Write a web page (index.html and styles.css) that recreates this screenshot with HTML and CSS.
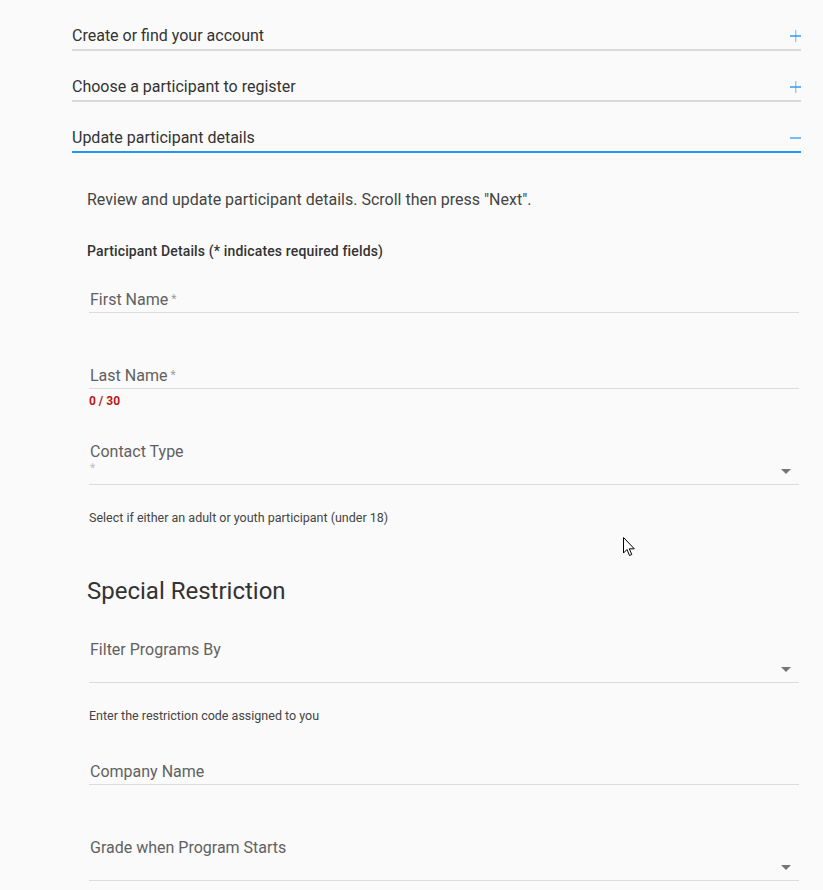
FILE: index.html
```html
<!DOCTYPE html>
<html>
<head>
<meta charset="utf-8">
<link rel="stylesheet" href="styles.css">
</head>
<body>
<div class="page">
  <div class="acc">
    <div class="acc-head"><span>Create or find your account</span>
      <svg class="ico" width="11" height="12" viewBox="0 0 11 12"><rect x="5" y="0" width="1.4" height="12" fill="#90c8f6"/><rect x="0" y="5.3" width="11" height="1.4" fill="#2196f3"/></svg>
    </div>
    <div class="acc-head"><span>Choose a participant to register</span>
      <svg class="ico" width="11" height="12" viewBox="0 0 11 12"><rect x="5" y="0" width="1.4" height="12" fill="#90c8f6"/><rect x="0" y="5.3" width="11" height="1.4" fill="#2196f3"/></svg>
    </div>
    <div class="acc-head open"><span>Update participant details</span>
      <svg class="ico" width="11" height="12" viewBox="0 0 11 12"><rect x="0" y="5.4" width="11" height="1.2" fill="#2196f3"/></svg>
    </div>
    <div class="panel">
      <p class="intro">Review and update participant details. Scroll then press "Next".</p>
      <p class="sub">Participant Details (* indicates required fields)</p>

      <div class="field f-first">
        <div class="label">First Name<span class="req">*</span></div>
      </div>

      <div class="field f-gap">
        <div class="label">Last Name<span class="req">*</span></div>
      </div>
      <div class="counter">0 / 30</div>

      <div class="field select f-contact">
        <div class="label">Contact Type</div>
        <div class="value"><span class="req-line">*</span><span class="arrow"></span></div>
      </div>
      <div class="hint">Select if either an adult or youth participant (under 18)</div>

      <h2 class="section">Special Restriction</h2>

      <div class="field select f-filter">
        <div class="label">Filter Programs By</div>
        <div class="value"><span class="arrow"></span></div>
      </div>
      <div class="hint">Enter the restriction code assigned to you</div>

      <div class="field f-company">
        <div class="label">Company Name</div>
      </div>

      <div class="field select f-gap">
        <div class="label">Grade when Program Starts</div>
        <div class="value"><span class="arrow"></span></div>
      </div>
    </div>
  </div>
  <svg class="cursor" width="13" height="20" viewBox="0 0 13 20"><path d="M0.5 0.5 L0.5 16 L4 12.5 L6.5 18.5 L8.8 17.5 L6.3 11.8 L11.3 11.8 Z" fill="#fff" stroke="#000" stroke-width="1"/></svg>
</div>
</body>
</html>
```

FILE: styles.css
```css
html, body {
  margin: 0;
  padding: 0;
  background: #fafafa;
}
body {
  font-family: Roboto, "Liberation Sans", Arial, sans-serif;
  color: #333;
}
.page {
  position: relative;
  height: 890px;
  overflow: hidden;
}
.acc {
  margin-left: 72px;
  width: 729px;
}
.acc-head {
  display: flex;
  justify-content: space-between;
  align-items: center;
  padding: 26px 0 4px 0;
  line-height: 19px;
  font-size: 16px;
  color: #333;
  border-bottom: 2px solid #d9d9d9;
}
.acc-head.open {
  border-bottom-color: #2196f3;
}
.ico {
  display: block;
}
.panel {
  padding: 37px 2px 0 15px;
}
.intro {
  margin: 0;
  font-size: 16px;
  line-height: 20px;
  color: #444;
}
.sub {
  margin: 33px 0 0 0;
  font-size: 14px;
  line-height: 16px;
  font-weight: 500;
  letter-spacing: 0.15px;
  color: #333;
}
.field {
  margin-left: 2px;
  border-bottom: 1px solid #dcdcdc;
  padding-bottom: 2px;
}
.label {
  padding-left: 1px;
  padding-top: 1px;
  font-size: 16px;
  line-height: 20px;
  color: #616161;
}
.req {
  font-size: 12px;
  color: #9e9e9e;
  vertical-align: top;
  margin-left: 3px;
  line-height: 14px;
  position: relative;
  top: 2px;
}
.value {
  position: relative;
  height: 20px;
}
.req-line {
  position: absolute;
  left: 1px;
  top: -1px;
  font-size: 12px;
  line-height: 14px;
  color: #bdbdbd;
}
.arrow {
  position: absolute;
  right: 8px;
  top: 7px;
  width: 0;
  height: 0;
  border-left: 5px solid transparent;
  border-right: 5px solid transparent;
  border-top: 5px solid #757575;
}
.f-first { margin-top: 30px; }
.f-gap { margin-top: 52px; }
.counter {
  margin: 5px 0 0 2px;
  font-size: 12px;
  line-height: 14px;
  font-weight: 700;
  color: #b71c1c;
}
.f-contact { margin-top: 33px; }
.hint {
  margin: 26px 0 0 2px;
  font-size: 12.5px;
  line-height: 14px;
  color: #444;
}
.section {
  margin: 52px 0 0 0;
  font-size: 24px;
  line-height: 28px;
  font-weight: 400;
  color: #333;
}
.f-filter { margin-top: 34px; }
.f-company { margin-top: 38px; }
.cursor {
  position: absolute;
  left: 623px;
  top: 537px;
}
```
